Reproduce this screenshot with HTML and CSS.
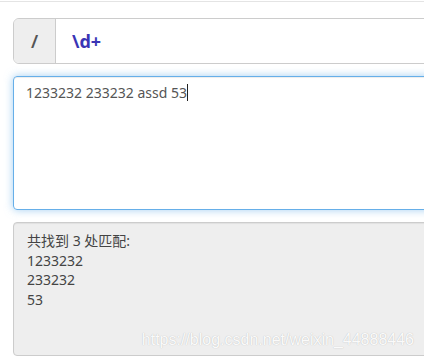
FILE: index.html
```html
<!DOCTYPE html>
<html lang="zh-CN">
<head>
<meta charset="utf-8">
<title>正则测试</title>
<link rel="stylesheet" href="styles.css">
</head>
<body>
<div class="topline"></div>
<div class="page">
  <div class="input-group">
    <span class="addon">/</span>
    <input class="regex-input" type="text" value="\d+">
  </div>
  <div class="source">1233232 233232 assd 53<span class="caret"></span></div>
  <div class="result">
    <div>共找到 3 处匹配:</div>
    <div>1233232</div>
    <div>233232</div>
    <div>53</div>
  </div>
</div>
<div class="watermark">https://blog.csdn.net/weixin_44888446</div>
</body>
</html>
```
FILE: styles.css
```css
html, body {
  margin: 0;
  padding: 0;
  overflow: hidden;
  background: #fff;
  font-family: "Noto Sans", "Noto Sans CJK SC", sans-serif;
  font-size: 14px;
  color: #333;
}
.topline {
  height: 1px;
  margin-top: 1px;
  background: #e4e4e4;
}
.page {
  width: 700px;
  padding: 16px 0 0 13px;
  box-sizing: border-box;
  display: flex;
  flex-direction: column;
  gap: 12px;
}
.input-group {
  display: flex;
  height: 46px;
  border: 1px solid #ccc;
  border-radius: 6px;
  box-sizing: border-box;
  overflow: hidden;
  box-shadow: inset 0 1px 1px rgba(0,0,0,.075);
}
.addon {
  width: 41px;
  flex: none;
  display: flex;
  align-items: center;
  justify-content: center;
  background: #eee;
  border-right: 1px solid #ccc;
  color: #555;
  font-size: 18px;
  font-weight: 600;
}
.regex-input {
  flex: 1;
  border: 0;
  outline: none;
  padding: 0 16px;
  font-family: "Noto Sans", sans-serif;
  font-size: 18px;
  font-weight: 700;
  color: #3a35b5;
  background: #fff;
}
.source {
  height: 134px;
  box-sizing: border-box;
  border: 1px solid #66afe9;
  border-radius: 4px;
  padding: 6px 12px;
  line-height: 20px;
  color: #555;
  box-shadow: inset 0 1px 1px rgba(0,0,0,.075), 0 0 8px rgba(102,175,233,.6);
}
.caret {
  display: inline-block;
  width: 1px;
  height: 17px;
  background: #222;
  vertical-align: -3px;
}
.result {
  height: 134px;
  box-sizing: border-box;
  border: 1px solid #ccc;
  border-radius: 4px;
  background: #eee;
  padding: 8px 13px;
  line-height: 19.6px;
  color: #444;
  box-shadow: inset 0 1px 1px rgba(0,0,0,.06);
}
.watermark {
  position: absolute;
  right: 10px;
  top: 331px;
  font-family: "Liberation Sans", sans-serif;
  font-size: 16px;
  color: rgba(255,255,255,.95);
  text-shadow: 0 0 1px rgba(0,0,0,.25);
  white-space: nowrap;
}
```
